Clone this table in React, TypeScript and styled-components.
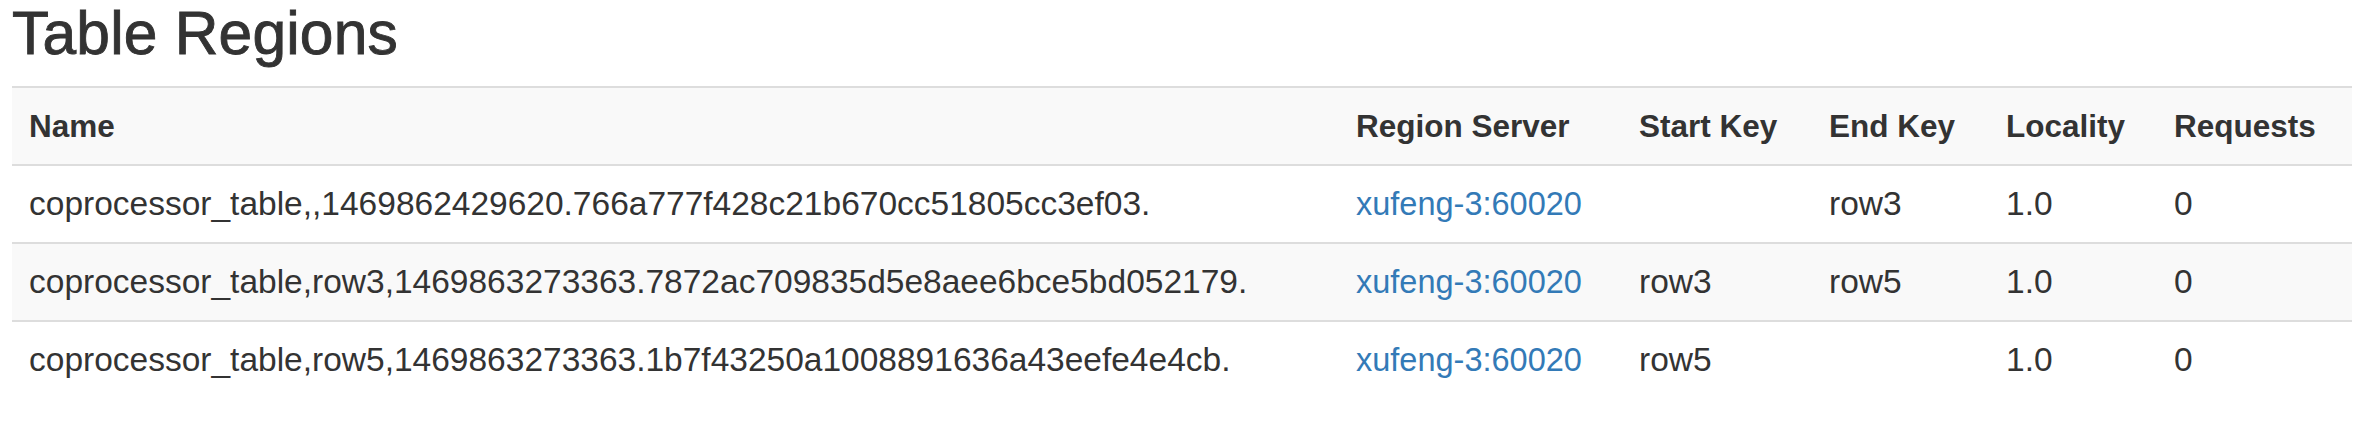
import React from "react";
import styled, { createGlobalStyle } from "styled-components";

const GlobalStyle = createGlobalStyle`
  html, body {
    margin: 0;
    padding: 0;
    background: #ffffff;
  }
  body {
    font-family: "Liberation Sans", Arial, Helvetica, sans-serif;
    color: #333333;
  }
`;

const Page = styled.div`
  padding: 0 24px 0 12px;
`;

const Title = styled.h2`
  margin: 0 0 20px 0;
  font-size: 60.5px;
  line-height: 66px;
  font-weight: 400;
  color: #333333;
  -webkit-text-stroke: 0.9px #333333;
  letter-spacing: 0.2px;
`;

const Table = styled.table`
  width: 2340px;
  table-layout: fixed;
  border-collapse: collapse;
  border-spacing: 0;
`;

const Row = styled.tr<{ $striped?: boolean }>`
  background: ${(p) => (p.$striped ? "#f9f9f9" : "#ffffff")};
`;

const HeadCell = styled.th<{ $w: number }>`
  width: ${(p) => p.$w}px;
  box-sizing: border-box;
  text-align: left;
  font-size: 31.5px;
  font-weight: 700;
  line-height: 42px;
  padding: 17px 16px 17px 17px;
  border-top: 2px solid #dddddd;
  border-bottom: 2px solid #dddddd;
  white-space: nowrap;
  overflow: hidden;
`;

const Cell = styled.td`
  text-align: left;
  font-size: 33.5px;
  line-height: 42px;
  padding: 17px 16px 17px 17px;
  border-top: 2px solid #dddddd;
  white-space: nowrap;
  overflow: hidden;
`;

const Link = styled.a`
  color: #337ab7;
  text-decoration: none;
  font-size: 32.5px;
`;

const columns = [
  { name: "Name", w: 1327 },
  { name: "Region Server", w: 283 },
  { name: "Start Key", w: 190 },
  { name: "End Key", w: 177 },
  { name: "Locality", w: 168 },
  { name: "Requests", w: 195 },
];

const rows = [
  {
    name: "coprocessor_table,,1469862429620.766a777f428c21b670cc51805cc3ef03.",
    server: "xufeng-3:60020",
    start: "",
    end: "row3",
    locality: "1.0",
    requests: "0",
  },
  {
    name: "coprocessor_table,row3,1469863273363.7872ac709835d5e8aee6bce5bd052179.",
    server: "xufeng-3:60020",
    start: "row3",
    end: "row5",
    locality: "1.0",
    requests: "0",
  },
  {
    name: "coprocessor_table,row5,1469863273363.1b7f43250a1008891636a43eefe4e4cb.",
    server: "xufeng-3:60020",
    start: "row5",
    end: "",
    locality: "1.0",
    requests: "0",
  },
];

export default function App() {
  return (
    <>
      <GlobalStyle />
      <Page>
        <Title>Table Regions</Title>
        <Table>
          <tbody>
            <Row $striped>
              {columns.map((c) => (
                <HeadCell key={c.name} $w={c.w}>
                  {c.name}
                </HeadCell>
              ))}
            </Row>
            {rows.map((r, i) => (
              <Row key={r.name} $striped={i % 2 === 1}>
                <Cell>{r.name}</Cell>
                <Cell>
                  <Link href="#">{r.server}</Link>
                </Cell>
                <Cell>{r.start}</Cell>
                <Cell>{r.end}</Cell>
                <Cell>{r.locality}</Cell>
                <Cell>{r.requests}</Cell>
              </Row>
            ))}
          </tbody>
        </Table>
      </Page>
    </>
  );
}
